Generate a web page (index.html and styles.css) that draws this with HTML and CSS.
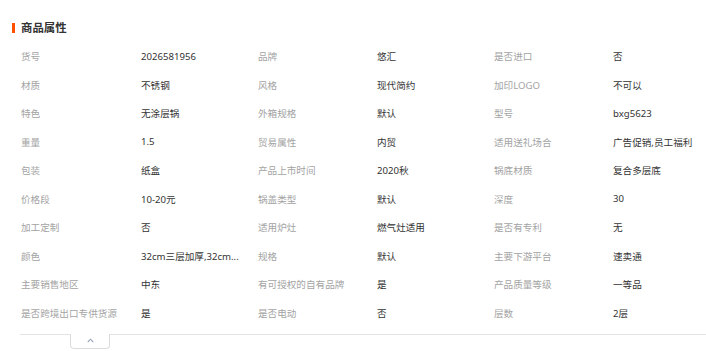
FILE: index.html
```html
<!DOCTYPE html>
<html lang="zh-CN">
<head>
<meta charset="utf-8">
<title>商品属性</title>
<link rel="stylesheet" href="styles.css">
</head>
<body>
<div class="panel">
  <div class="title"><span class="bar"></span><span class="title-text">商品属性</span></div>
  <div class="attrs">
    <div class="k">货号</div><div class="v">2026581956</div><div class="k">品牌</div><div class="v">悠汇</div><div class="k">是否进口</div><div class="v">否</div>
    <div class="k">材质</div><div class="v">不锈钢</div><div class="k">风格</div><div class="v">现代简约</div><div class="k">加印LOGO</div><div class="v">不可以</div>
    <div class="k">特色</div><div class="v">无涂层锅</div><div class="k">外箱规格</div><div class="v">默认</div><div class="k">型号</div><div class="v">bxg5623</div>
    <div class="k">重量</div><div class="v">1.5</div><div class="k">贸易属性</div><div class="v">内贸</div><div class="k">适用送礼场合</div><div class="v">广告促销,员工福利</div>
    <div class="k">包装</div><div class="v">纸盒</div><div class="k">产品上市时间</div><div class="v">2020秋</div><div class="k">锅底材质</div><div class="v">复合多层底</div>
    <div class="k">价格段</div><div class="v">10-20元</div><div class="k">锅盖类型</div><div class="v">默认</div><div class="k">深度</div><div class="v">30</div>
    <div class="k">加工定制</div><div class="v">否</div><div class="k">适用炉灶</div><div class="v">燃气灶适用</div><div class="k">是否有专利</div><div class="v">无</div>
    <div class="k">颜色</div><div class="v">32cm三层加厚,32cm...</div><div class="k">规格</div><div class="v">默认</div><div class="k">主要下游平台</div><div class="v">速卖通</div>
    <div class="k">主要销售地区</div><div class="v">中东</div><div class="k">有可授权的自有品牌</div><div class="v">是</div><div class="k">产品质量等级</div><div class="v">一等品</div>
    <div class="k">是否跨境出口专供货源</div><div class="v">是</div><div class="k">是否电动</div><div class="v">否</div><div class="k">层数</div><div class="v">2层</div>
  </div>
  <div class="divider"></div>
  <div class="toggle">
    <svg width="7" height="5" viewBox="0 0 7 5"><polyline points="0.8,4 3.5,1.2 6.2,4" fill="none" stroke="#9aa6b8" stroke-width="1.1"/></svg>
  </div>
</div>
</body>
</html>
```

FILE: styles.css
```css
html, body {
  margin: 0;
  padding: 0;
  background: #fff;
}
body {
  font-family: "Noto Sans", "Noto Sans CJK SC", sans-serif;
  color: #333;
  overflow: hidden;
}
.panel {
  padding: 20px 0 0 12px;
}
.title {
  display: flex;
  align-items: center;
  height: 16px;
}
.bar {
  width: 3px;
  height: 10px;
  background: #ff5000;
  margin-right: 6px;
}
.title-text {
  font-size: 11.4px;
  font-weight: bold;
  color: #333;
  line-height: 16px;
}
.attrs {
  margin: 6px 0 0 9px;
  display: grid;
  grid-template-columns: 120px 117px 119px 117px 119px 1fr;
  grid-auto-rows: 28.5px;
  font-size: 9.6px;
  align-items: center;
}
.k {
  color: #a3a3a3;
  white-space: nowrap;
}
.v {
  color: #333;
  white-space: nowrap;
}
.divider {
  margin: 7px 0 0 8px;
  height: 1px;
  background: #e3e3e3;
}
.toggle {
  margin: -1px 0 0 58px;
  width: 38px;
  height: 13px;
  border: 1px solid #dcdcdc;
  border-top: none;
  border-radius: 0 0 4px 4px;
  background: #fff;
  display: flex;
  align-items: center;
  justify-content: center;
  padding-bottom: 1px;
}
.toggle svg {
  display: block;
}
```
